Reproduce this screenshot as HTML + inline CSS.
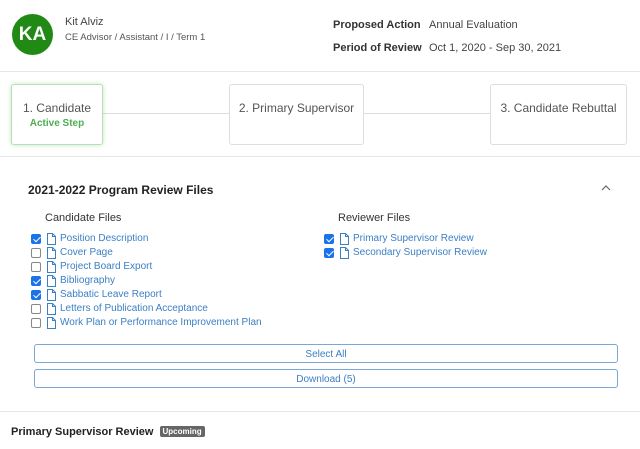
<!DOCTYPE html>
<html><head><style>
*{margin:0;padding:0;box-sizing:border-box}
body{width:640px;height:449px;background:#fff;font-family:"Liberation Sans",sans-serif;position:relative;overflow:hidden;color:#333}
.a{position:absolute;white-space:nowrap}
.hl{position:absolute;left:0;width:640px;height:1px;background:#e6e6e6}
.box{position:absolute;border:1px solid #ddd;border-radius:3px;background:#fff;font-size:12px;color:#555;text-align:center;padding-top:16px}
.row{position:absolute;height:14px;width:300px;font-size:10px;color:#3b7fc4;line-height:14px;white-space:nowrap}
.cb{position:absolute;left:0;top:2px;width:10px;height:10px;border:1px solid #888;border-radius:2px;background:#fff}
.cb.on{background:#1a73e8;border-color:#1a73e8}
.cb.on:after{content:"";position:absolute;left:2.5px;top:0px;width:3px;height:6px;border:solid #fff;border-width:0 1.5px 1.5px 0;transform:rotate(45deg)}
.ic{position:absolute;left:16px;top:1px}
.t{position:absolute;left:29px;top:0;white-space:nowrap}
.btn{position:absolute;left:34px;width:584px;height:19px;border:1px solid #7aa7d4;border-radius:3px;font-size:10px;color:#3b7fc4;text-align:center;line-height:19px}
</style></head><body>
<div class="a" style="left:12px;top:14px;width:41px;height:41px;border-radius:50%;background:#208a15;color:#fff;font-size:19px;font-weight:bold;text-align:center;line-height:41px">KA</div>
<div class="a" style="left:65px;top:16px;font-size:11px;color:#444">Kit Alviz</div>
<div class="a" style="left:65px;top:32px;font-size:9.5px;color:#555">CE Advisor / Assistant / I / Term 1</div>
<div class="a" style="left:333px;top:19px;font-size:11px;font-weight:bold;color:#333">Proposed Action</div>
<div class="a" style="left:429px;top:19px;font-size:11px;color:#444">Annual Evaluation</div>
<div class="a" style="left:333px;top:42px;font-size:11px;font-weight:bold;color:#333">Period of Review</div>
<div class="a" style="left:429px;top:42px;font-size:11px;color:#444">Oct 1, 2020 - Sep 30, 2021</div>
<div class="hl" style="top:71px"></div>
<div class="a" style="left:100px;top:113px;width:400px;height:1px;background:#ddd"></div>
<div class="box" style="left:11px;top:84px;width:92px;height:61px;border-color:#b8e0b8;box-shadow:0 0 5px rgba(80,180,80,.35)">1. Candidate<div style="font-size:10px;font-weight:bold;color:#4caf50;margin-top:3px">Active Step</div></div>
<div class="box" style="left:229px;top:84px;width:135px;height:61px">2. Primary Supervisor</div>
<div class="box" style="left:490px;top:84px;width:137px;height:61px">3. Candidate Rebuttal</div>
<div class="hl" style="top:156px"></div>
<div class="a" style="left:28px;top:183px;font-size:12px;font-weight:bold;color:#222">2021-2022 Program Review Files</div>
<svg class="a" style="left:601px;top:184px" width="10" height="8"><path d="M1 6 L5 2 L9 6" stroke="#666" stroke-width="1.2" fill="none"/></svg>
<div class="a" style="left:45px;top:212px;font-size:11px;color:#333">Candidate Files</div>
<div class="a" style="left:338px;top:212px;font-size:11px;color:#333">Reviewer Files</div>
<div id="c"></div>
<div class="btn" style="top:344px">Select All</div>
<div class="btn" style="top:369px">Download (5)</div>
<div class="hl" style="top:411px"></div>
<div class="a" style="left:11px;top:426px;font-size:11px;font-weight:bold;color:#222">Primary Supervisor Review <span style="display:inline-block;background:#666;color:#fff;font-size:8px;padding:1px 3px;border-radius:2px;vertical-align:1px;margin-left:3px">Upcoming</span></div>
<script>
var c=[["Position Description",1],["Cover Page",0],["Project Board Export",0],["Bibliography",1],["Sabbatic Leave Report",1],["Letters of Publication Acceptance",0],["Work Plan or Performance Improvement Plan",0]];
var r=[["Primary Supervisor Review",1],["Secondary Supervisor Review",1]];
var ic='<svg class="ic" width="9" height="12"><path d="M0.5 0.5 H5.5 L8.5 3.5 V11.5 H0.5 Z M5.5 0.5 V3.5 H8.5" stroke="#3b7fc4" stroke-width="1" fill="none"/></svg>';
var h="";
c.forEach(function(x,i){h+='<div class="row" style="left:31px;top:'+(232+i*14)+'px"><div class="cb'+(x[1]?' on':'')+'"></div>'+ic+'<span class="t">'+x[0]+'</span></div>'});
r.forEach(function(x,i){h+='<div class="row" style="left:324px;top:'+(232+i*14)+'px"><div class="cb'+(x[1]?' on':'')+'"></div>'+ic+'<span class="t">'+x[0]+'</span></div>'});
document.getElementById("c").innerHTML=h;
</script>
</body></html>
